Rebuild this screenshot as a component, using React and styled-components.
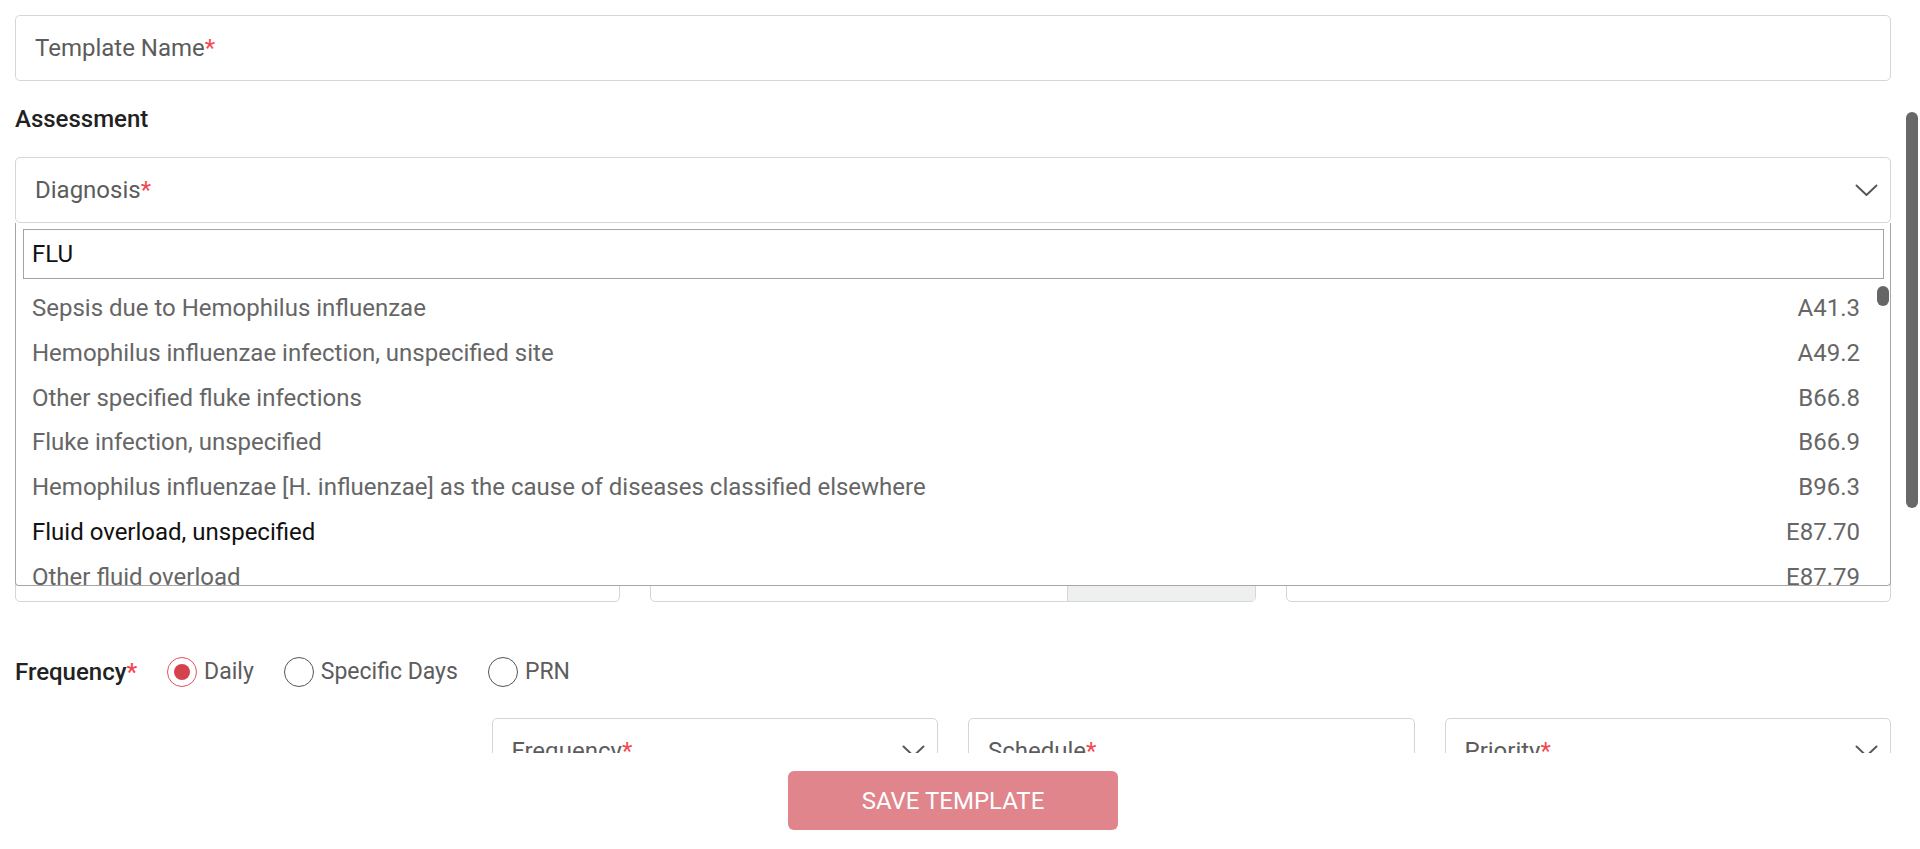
import React from 'react';
import styled, { createGlobalStyle } from 'styled-components';

const GlobalStyle = createGlobalStyle`
  html, body {
    margin: 0;
    padding: 0;
    height: 100%;
    overflow: hidden;
    background: #fff;
  }
  body {
    font-family: Roboto, "Noto Sans", "Liberation Sans", sans-serif;
  }
  * {
    box-sizing: border-box;
  }
`;

const colors = {
    border: '#d3d6db',
    menu_border: '#a6a6a6',
    label: '#5c5c5c',
    text: '#666666',
    dark: '#222222',
    required: '#f4474d',
    accent: '#d4424e',
    button: '#e1858d',
    thumb: '#686868',
};

const Page = styled.div`
    display: flex;
    width: 1920px;
    height: 849px;
`;

const Main = styled.div`
    flex: 1;
    min-width: 0;
    display: flex;
    flex-direction: column;
`;

const FormArea = styled.div`
    height: 753px;
    overflow: hidden;
    padding: 15px 15px 0;
`;

const Footer = styled.div`
    flex: 1;
    display: flex;
    justify-content: center;
    padding-top: 18px;
`;

const SaveButton = styled.button`
    width: 330px;
    height: 59px;
    border: none;
    border-radius: 6px;
    background: ${colors.button};
    color: #fff;
    font-family: Roboto, sans-serif;
    font-size: 24px;
    font-weight: 400;
    text-transform: uppercase;
    cursor: not-allowed;
`;

const PageTrack = styled.div`
    width: 14px;
    padding-top: 112px;
`;

const PageThumb = styled.div`
    width: 12px;
    height: 396px;
    border-radius: 6px;
    background: ${colors.thumb};
`;

const Field = styled.div`
    position: relative;
    height: 66px;
    margin-top: ${props => props.$mt || 0}px;
    border: 1px solid ${colors.border};
    border-radius: 5px;
    display: flex;
    align-items: center;
    padding: 0 12px 0 19px;
    background: #fff;
`;

const TextBox = styled(Field)`
    height: 123px;
    align-items: flex-start;
    padding-top: 18px;
`;

const FieldLabel = styled.span`
    flex: 1;
    font-size: 24px;
    line-height: 28px;
    color: ${colors.label};
    white-space: nowrap;
`;

const Req = styled.span`
    color: ${colors.required};
`;

const Adornment = styled.div`
    align-self: stretch;
    width: 188px;
    margin: 0 -12px 0 0;
    border-left: 1px solid ${colors.border};
    border-radius: 0 4px 4px 0;
    background: #eef0ef;
    display: flex;
    align-items: center;
    padding-left: 18px;
    font-size: 24px;
    color: ${colors.label};
`;

const SectionTitle = styled.div`
    margin-top: 24px;
    font-size: 24px;
    line-height: 28px;
    font-weight: 500;
    color: ${colors.dark};
`;

const Grid = styled.div`
    display: grid;
    grid-template-columns: repeat(${props => props.$cols}, 1fr);
    gap: 30px;
    margin-top: ${props => props.$mt}px;
`;

const Menu = styled.div`
    position: absolute;
    top: calc(100% + 1px);
    left: -1px;
    right: -1px;
    height: 363px;
    z-index: 10;
    display: flex;
    flex-direction: column;
    padding: 6px 6px 0 7px;
    border: 1px solid ${colors.menu_border};
    border-top: none;
    border-radius: 0 0 4px 4px;
    background: #fff;
`;

const SearchInput = styled.input`
    height: 50px;
    flex-shrink: 0;
    border: 1px solid #a3a3a3;
    border-radius: 0;
    padding: 0 8px;
    font-family: Roboto, sans-serif;
    font-size: 24px;
    color: #111;
    outline: none;
`;

const ListArea = styled.div`
    flex: 1;
    min-height: 0;
    display: flex;
    margin: 6.5px -6px 0 -7px;
    overflow: hidden;
`;

const Options = styled.div`
    flex: 1;
    min-width: 0;
    padding: 0 17px 0 16px;
`;

const Option = styled.div`
    height: 44.83px;
    display: flex;
    align-items: center;
    justify-content: space-between;
    font-size: 24px;
    line-height: 28px;
    white-space: nowrap;
    color: ${props => props.$active ? '#111' : colors.text};
`;

const Code = styled.span`
    color: ${colors.text};
`;

const ListTrack = styled.div`
    width: 13px;
    flex-shrink: 0;
    padding-top: 0.5px;
`;

const ListThumb = styled.div`
    width: 12px;
    height: 20px;
    border-radius: 6px;
    background: #666;
`;

const RadioRow = styled.div`
    display: flex;
    align-items: center;
    height: 32px;
    margin-top: 54px;
`;

const GroupLabel = styled.span`
    font-size: 24px;
    line-height: 28px;
    font-weight: 500;
    color: ${colors.dark};
    margin-right: 30px;
`;

const RadioOption = styled.label`
    display: flex;
    align-items: center;
    gap: 7px;
    margin-right: 30px;
    font-size: 23px;
    line-height: 28px;
    color: ${colors.label};
`;

const RadioCircle = styled.span`
    width: 30px;
    height: 30px;
    border-radius: 50%;
    border: 1.5px solid ${props => props.$checked ? '#dd5560' : '#555'};
    display: flex;
    align-items: center;
    justify-content: center;
    &::after {
        content: '';
        width: 16px;
        height: 16px;
        border-radius: 50%;
        background: ${colors.accent};
        display: ${props => props.$checked ? 'block' : 'none'};
    }
`;

const Chevron = () => (
    <svg width="23" height="13" viewBox="0 0 23 13" fill="none">
        <polyline points="1.5,1.5 11.5,11 21.5,1.5" stroke="#555" strokeWidth="1.9" strokeLinecap="round" strokeLinejoin="round" />
    </svg>
);

const diagnoses = [
    ['Sepsis due to Hemophilus influenzae', 'A41.3'],
    ['Hemophilus influenzae infection, unspecified site', 'A49.2'],
    ['Other specified fluke infections', 'B66.8'],
    ['Fluke infection, unspecified', 'B66.9'],
    ['Hemophilus influenzae [H. influenzae] as the cause of diseases classified elsewhere', 'B96.3'],
    ['Fluid overload, unspecified', 'E87.70'],
    ['Other fluid overload', 'E87.79'],
    ['Influenza due to identified novel influenza A virus with pneumonia', 'J09.X1'],
    ['Influenza due to other identified influenza virus with unspecified type of pneumonia', 'J10.00'],
];

const Required = ({ children }) => (
    <FieldLabel>{children}<Req>*</Req></FieldLabel>
);

const App = () => {
    const [frequency, set_frequency] = React.useState('daily');
    const [search, set_search] = React.useState('FLU');

    const radios = [
        ['daily', 'Daily'],
        ['specific', 'Specific Days'],
        ['prn', 'PRN'],
    ];

    return (
        <>
            <GlobalStyle />
            <Page>
                <Main>
                    <FormArea>
                        <Field>
                            <Required>Template Name</Required>
                        </Field>

                        <SectionTitle>Assessment</SectionTitle>

                        <Field $mt={24}>
                            <Required>Diagnosis</Required>
                            <Chevron />
                            <Menu>
                                <SearchInput value={search} onChange={e => set_search(e.target.value)} />
                                <ListArea>
                                    <Options>
                                        {diagnoses.map(([name, code], i) => (
                                            <Option key={code} $active={i === 5}>
                                                <span>{name}</span>
                                                <Code>{code}</Code>
                                            </Option>
                                        ))}
                                    </Options>
                                    <ListTrack>
                                        <ListThumb />
                                    </ListTrack>
                                </ListArea>
                            </Menu>
                        </Field>

                        <Field $mt={24}>
                            <Required>Goal</Required>
                            <Chevron />
                        </Field>

                        <SectionTitle>Plan</SectionTitle>

                        <TextBox $mt={24}>
                            <Required>Instructions</Required>
                        </TextBox>

                        <Grid $cols={3} $mt={24}>
                            <Field>
                                <Required>Start Date</Required>
                            </Field>
                            <Field>
                                <Required>Duration</Required>
                                <Adornment>Days</Adornment>
                            </Field>
                            <Field>
                                <FieldLabel>End Date</FieldLabel>
                            </Field>
                        </Grid>

                        <RadioRow>
                            <GroupLabel>Frequency<Req>*</Req></GroupLabel>
                            {radios.map(([key, label]) => (
                                <RadioOption key={key} onClick={() => set_frequency(key)}>
                                    <RadioCircle $checked={frequency === key} />
                                    {label}
                                </RadioOption>
                            ))}
                        </RadioRow>

                        <Grid $cols={4} $mt={30}>
                            <div />
                            <Field>
                                <Required>Frequency</Required>
                                <Chevron />
                            </Field>
                            <Field>
                                <Required>Schedule</Required>
                            </Field>
                            <Field>
                                <Required>Priority</Required>
                                <Chevron />
                            </Field>
                        </Grid>
                    </FormArea>

                    <Footer>
                        <SaveButton>Save Template</SaveButton>
                    </Footer>
                </Main>
                <PageTrack>
                    <PageThumb />
                </PageTrack>
            </Page>
        </>
    );
};

export default App;
